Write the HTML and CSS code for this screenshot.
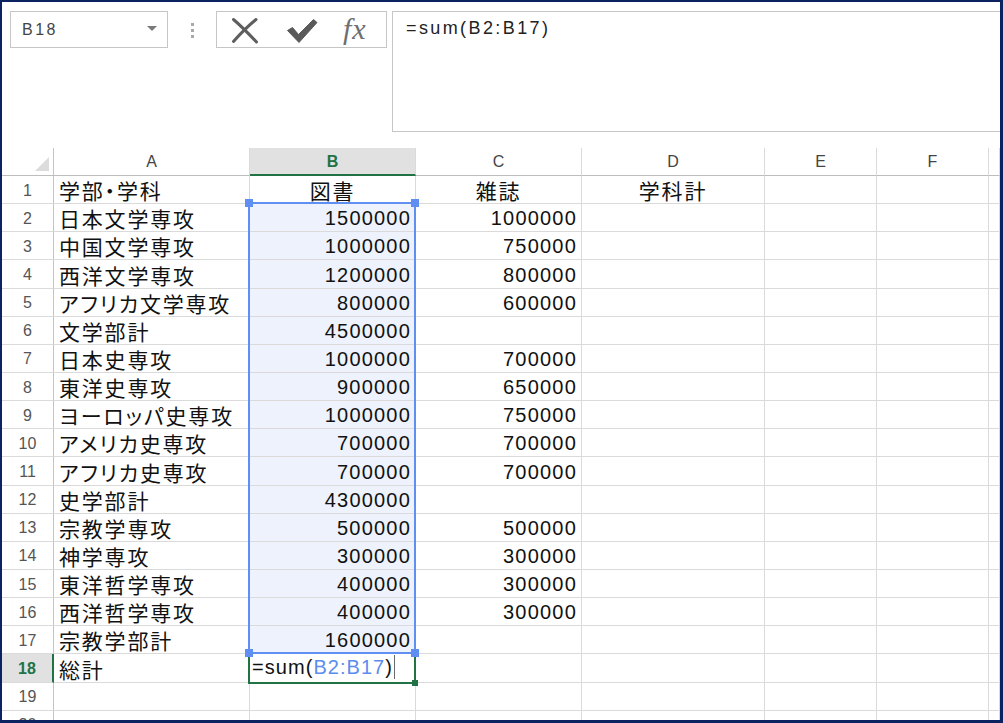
FILE: index.html
```html
<!DOCTYPE html>
<html lang="ja">
<head>
<meta charset="utf-8">
<title>Excel sheet</title>
<link rel="stylesheet" href="styles.css">
</head>
<body>
<div class="frame">
  <div class="toolbar">
    <div class="namebox"><span class="name">B18</span><span class="caret"></span></div>
    <div class="grip"><i></i><i></i><i></i></div>
    <div class="fxbox">
      <svg class="ico-x" width="28" height="27" viewBox="0 0 28 27"><path d="M2.5 2.5 C9 8 16 15 25.5 25" /><path d="M25 2.5 C17 9 10 16 2.5 24.5" /></svg>
      <svg class="ico-ok" width="32" height="26" viewBox="0 0 32 26"><path d="M1.5 12.5 L6.5 9.5 L12.5 16.5 L27.5 1.5 L31 4.5 L13 24.5 Z" /></svg>
      <span class="fx">fx</span>
    </div>
    <div class="formula">=sum(B2:B17)</div>
  </div>
  <div class="sheet">
    <div class="grid">
      <div class="corner"><span class="tri"></span></div>
      <div class="ch">A</div><div class="ch hl">B</div><div class="ch">C</div><div class="ch">D</div><div class="ch">E</div><div class="ch">F</div><div class="ch"></div>

      <div class="rh">1</div><div class="c jp">学部・学科</div><div class="c jp ctr">図書</div><div class="c jp ctr">雑誌</div><div class="c jp ctr">学科計</div><div class="c"></div><div class="c"></div><div class="c"></div>
      <div class="rh">2</div><div class="c jp">日本文学専攻</div><div class="c num in">1500000</div><div class="c num">1000000</div><div class="c"></div><div class="c"></div><div class="c"></div><div class="c"></div>
      <div class="rh">3</div><div class="c jp">中国文学専攻</div><div class="c num in">1000000</div><div class="c num">750000</div><div class="c"></div><div class="c"></div><div class="c"></div><div class="c"></div>
      <div class="rh">4</div><div class="c jp">西洋文学専攻</div><div class="c num in">1200000</div><div class="c num">800000</div><div class="c"></div><div class="c"></div><div class="c"></div><div class="c"></div>
      <div class="rh">5</div><div class="c jp">アフリカ文学専攻</div><div class="c num in">800000</div><div class="c num">600000</div><div class="c"></div><div class="c"></div><div class="c"></div><div class="c"></div>
      <div class="rh">6</div><div class="c jp">文学部計</div><div class="c num in">4500000</div><div class="c num"></div><div class="c"></div><div class="c"></div><div class="c"></div><div class="c"></div>
      <div class="rh">7</div><div class="c jp">日本史専攻</div><div class="c num in">1000000</div><div class="c num">700000</div><div class="c"></div><div class="c"></div><div class="c"></div><div class="c"></div>
      <div class="rh">8</div><div class="c jp">東洋史専攻</div><div class="c num in">900000</div><div class="c num">650000</div><div class="c"></div><div class="c"></div><div class="c"></div><div class="c"></div>
      <div class="rh">9</div><div class="c jp">ヨーロッパ史専攻</div><div class="c num in">1000000</div><div class="c num">750000</div><div class="c"></div><div class="c"></div><div class="c"></div><div class="c"></div>
      <div class="rh">10</div><div class="c jp">アメリカ史専攻</div><div class="c num in">700000</div><div class="c num">700000</div><div class="c"></div><div class="c"></div><div class="c"></div><div class="c"></div>
      <div class="rh">11</div><div class="c jp">アフリカ史専攻</div><div class="c num in">700000</div><div class="c num">700000</div><div class="c"></div><div class="c"></div><div class="c"></div><div class="c"></div>
      <div class="rh">12</div><div class="c jp">史学部計</div><div class="c num in">4300000</div><div class="c num"></div><div class="c"></div><div class="c"></div><div class="c"></div><div class="c"></div>
      <div class="rh">13</div><div class="c jp">宗教学専攻</div><div class="c num in">500000</div><div class="c num">500000</div><div class="c"></div><div class="c"></div><div class="c"></div><div class="c"></div>
      <div class="rh">14</div><div class="c jp">神学専攻</div><div class="c num in">300000</div><div class="c num">300000</div><div class="c"></div><div class="c"></div><div class="c"></div><div class="c"></div>
      <div class="rh">15</div><div class="c jp">東洋哲学専攻</div><div class="c num in">400000</div><div class="c num">300000</div><div class="c"></div><div class="c"></div><div class="c"></div><div class="c"></div>
      <div class="rh">16</div><div class="c jp">西洋哲学専攻</div><div class="c num in">400000</div><div class="c num">300000</div><div class="c"></div><div class="c"></div><div class="c"></div><div class="c"></div>
      <div class="rh">17</div><div class="c jp">宗教学部計</div><div class="c num in">1600000</div><div class="c num"></div><div class="c"></div><div class="c"></div><div class="c"></div><div class="c"></div>
      <div class="rh hl">18</div><div class="c jp">総計</div><div class="c edit">=sum(<span class="ref">B2:B17</span>)<span class="cursor"></span></div><div class="c"></div><div class="c"></div><div class="c"></div><div class="c"></div><div class="c"></div>
      <div class="rh">19</div><div class="c"></div><div class="c"></div><div class="c"></div><div class="c"></div><div class="c"></div><div class="c"></div><div class="c"></div>
      <div class="rh">20</div><div class="c"></div><div class="c"></div><div class="c"></div><div class="c"></div><div class="c"></div><div class="c"></div><div class="c"></div>
    </div>
    <div class="active"><span class="handle-g"></span></div>
    <div class="range">
      <span class="hd tl"></span><span class="hd tr"></span><span class="hd bl"></span><span class="hd br"></span>
    </div>
  </div>
</div>
</body>
</html>
```

FILE: styles.css
```css
html, body {
  margin: 0;
  padding: 0;
  background: #ffffff;
}

.frame {
  width: 1003px;
  height: 723px;
  box-sizing: border-box;
  border-style: solid;
  border-color: #0b2461;
  border-width: 2px 3px 3px 2px;
  overflow: hidden;
  background: #ffffff;
  font-family: "Liberation Sans", "Noto Sans CJK JP", sans-serif;
}

/* ---------- formula toolbar ---------- */
.toolbar {
  height: 146px;
  box-sizing: border-box;
  display: flex;
  align-items: flex-start;
  padding: 9px 0 0 8px;
}

.namebox {
  flex: none;
  width: 158px;
  height: 37px;
  box-sizing: border-box;
  border: 1px solid #c6c6c6;
  display: flex;
  align-items: center;
  justify-content: space-between;
  padding: 0 10px 0 11px;
}

.name {
  font-size: 16px;
  letter-spacing: 2.5px;
  color: #444444;
}

.caret {
  width: 0;
  height: 0;
  border-left: 5px solid transparent;
  border-right: 5px solid transparent;
  border-top: 5px solid #7a7a7a;
  margin-top: -2px;
}

.grip {
  flex: none;
  margin-left: 23px;
  padding-top: 12px;
  display: flex;
  flex-direction: column;
  gap: 3px;
}

.grip i {
  display: block;
  width: 3px;
  height: 3px;
  background: #a9a9a9;
}

.fxbox {
  flex: none;
  margin-left: 22px;
  width: 171px;
  height: 37px;
  box-sizing: border-box;
  border: 1px solid #c6c6c6;
  display: flex;
  align-items: center;
  padding-left: 14px;
}

.ico-x path {
  fill: none;
  stroke: #5e5e5e;
  stroke-width: 3;
  stroke-linecap: round;
}

.ico-x {
  margin-top: 1px;
}

.ico-ok {
  margin-left: 27px;
  margin-top: 2px;
}

.ico-ok path {
  fill: #5a5a5a;
  stroke: #5a5a5a;
  stroke-width: 1;
  stroke-linejoin: round;
}

.fx {
  margin-left: 25px;
  font-family: "Liberation Serif", "DejaVu Serif", serif;
  font-style: italic;
  font-size: 30px;
  color: #6f6f6f;
  letter-spacing: 1px;
  line-height: 30px;
  margin-top: -2px;
}

.formula {
  flex: none;
  margin-left: 5px;
  width: 700px;
  height: 121px;
  box-sizing: border-box;
  border: 1px solid #c6c6c6;
  padding: 6px 0 0 13px;
  font-size: 18px;
  letter-spacing: 2.4px;
  color: #222222;
}

/* ---------- sheet grid ---------- */
.sheet {
  position: relative;
}

.grid {
  display: grid;
  grid-template-columns: 52px 196px 166px 166px 183px 112px 112px 1fr;
  grid-template-rows: 28px;
  grid-auto-rows: 28.15px;
}

.corner {
  box-sizing: border-box;
  border-right: 1px solid #c4c4c4;
  border-bottom: 1px solid #bdbdbd;
  display: flex;
  align-items: flex-end;
  justify-content: flex-end;
  padding: 0 4px 4px 0;
}

.tri {
  display: block;
  width: 14px;
  height: 14px;
  background: #dcdcdc;
  clip-path: polygon(100% 0, 100% 100%, 0 100%);
}

.ch {
  box-sizing: border-box;
  border-right: 1px solid #dadada;
  border-bottom: 1px solid #bdbdbd;
  display: flex;
  align-items: center;
  justify-content: center;
  font-size: 16px;
  color: #444444;
  padding-top: 1px;
}

.ch.hl {
  background: #e1e1e1;
  border-bottom: 2px solid #217346;
  color: #217346;
  font-weight: bold;
  padding-top: 2px;
}

.rh {
  box-sizing: border-box;
  border-right: 1px solid #c4c4c4;
  border-bottom: 1px solid #dadada;
  display: flex;
  align-items: center;
  justify-content: center;
  font-size: 16px;
  color: #555555;
  padding-top: 2px;
}

.rh.hl {
  background: #e1e1e1;
  border-right: 2px solid #217346;
  color: #217346;
  font-weight: bold;
}

.c {
  box-sizing: border-box;
  border-right: 1px solid #dadada;
  border-bottom: 1px solid #dadada;
  display: flex;
  align-items: flex-end;
  white-space: nowrap;
  color: #111111;
  min-width: 0;
}

.jp {
  font-family: "Noto Sans CJK JP", sans-serif;
  font-size: 21px;
  letter-spacing: 1.8px;
  line-height: 24px;
  padding: 0 0 1px 5px;
  font-feature-settings: "palt" 1;
}

.jp.ctr {
  justify-content: center;
  padding-left: 0;
}

.num {
  font-size: 20px;
  letter-spacing: 1.2px;
  line-height: 24px;
  justify-content: flex-end;
  padding: 0 4px 1px 0;
}

.in {
  background: #edf2fc;
}

.edit {
  font-size: 20px;
  letter-spacing: 1.05px;
  line-height: 24px;
  padding: 0 0 1px 2px;
  align-items: center;
}

.ref {
  color: #5b8def;
}

.cursor {
  display: inline-block;
  width: 0;
  height: 24px;
  border-left: 1px solid #6a6a6a;
  margin-left: 1px;
}

/* ---------- selection overlays ---------- */
.active {
  position: absolute;
  left: 246px;
  top: 504px;
  width: 168px;
  height: 32px;
  box-sizing: border-box;
  border: 2px solid #217346;
}

.handle-g {
  position: absolute;
  right: -4px;
  bottom: -4px;
  width: 6px;
  height: 6px;
  background: #217346;
}

.range {
  position: absolute;
  left: 246px;
  top: 54px;
  width: 168px;
  height: 452px;
  box-sizing: border-box;
  border: 2px solid #5f8ff0;
}

.hd {
  position: absolute;
  width: 8px;
  height: 8px;
  background: #5f8ff0;
}

.hd.tl { left: -5px; top: -5px; }
.hd.tr { right: -5px; top: -5px; }
.hd.bl { left: -5px; bottom: -5px; }
.hd.br { right: -5px; bottom: -5px; }
```
